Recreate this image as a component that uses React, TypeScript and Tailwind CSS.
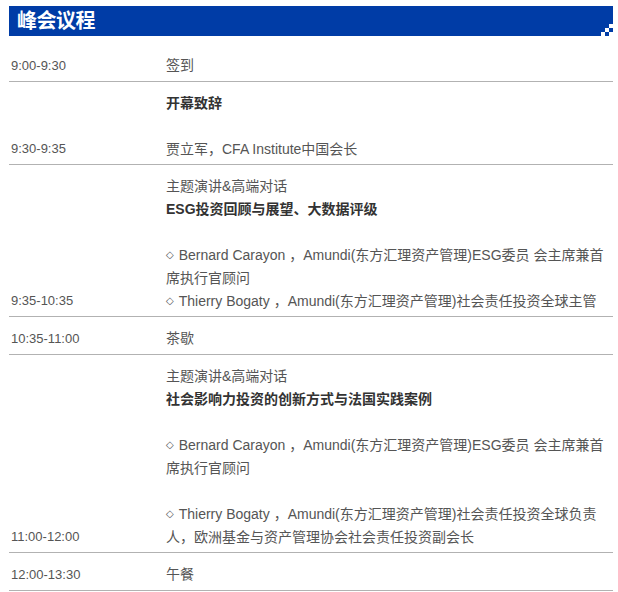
import React from "react";

type Line = { text: string; bold?: boolean; blank?: boolean; bullet?: boolean };
type Row = { time: string; lines: Line[] };

const rows: Row[] = [
    { time: "9:00-9:30", lines: [{ text: "签到" }] },
    {
        time: "9:30-9:35",
        lines: [{ text: "开幕致辞", bold: true }, { text: "", blank: true }, { text: "贾立军，CFA Institute中国会长" }],
    },
    {
        time: "9:35-10:35",
        lines: [
            { text: "主题演讲&高端对话" },
            { text: "ESG投资回顾与展望、大数据评级", bold: true },
            { text: "", blank: true },
            { text: "Bernard Carayon ，Amundi(东方汇理资产管理)ESG委员 会主席兼首席执行官顾问", bullet: true },
            { text: "Thierry Bogaty ，Amundi(东方汇理资产管理)社会责任投资全球主管", bullet: true },
        ],
    },
    { time: "10:35-11:00", lines: [{ text: "茶歇" }] },
    {
        time: "11:00-12:00",
        lines: [
            { text: "主题演讲&高端对话" },
            { text: "社会影响力投资的创新方式与法国实践案例", bold: true },
            { text: "", blank: true },
            { text: "Bernard Carayon ，Amundi(东方汇理资产管理)ESG委员 会主席兼首席执行官顾问", bullet: true },
            { text: "", blank: true },
            { text: "Thierry Bogaty ，Amundi(东方汇理资产管理)社会责任投资全球负责人，欧洲基金与资产管理协会社会责任投资副会长", bullet: true },
        ],
    },
    { time: "12:00-13:30", lines: [{ text: "午餐" }] },
];

function Corner() {
    return (
        <svg width="12" height="12" viewBox="0 0 12 12" className="absolute right-0 bottom-0">
            <rect x="8" y="0" width="4" height="4" fill="#fff" />
            <rect x="4" y="4" width="4" height="4" fill="#fff" />
            <rect x="0" y="8" width="4" height="4" fill="#fff" />
            <rect x="8" y="8" width="4" height="4" fill="#fff" />
        </svg>
    );
}

export default function App() {
    return (
        <div className="w-[618px] h-[592px] bg-white overflow-hidden pt-[6px] pl-[9px]" style={{ fontFamily: '"Liberation Sans", Arial, "Noto Sans CJK SC", sans-serif' }}>
            <div className="w-[604px]">
                <div className="relative h-[30px] bg-[#003ca6] pl-[8px] flex items-center">
                    <h1 className="text-white text-[20px] font-bold leading-none tracking-[-0.5px]">峰会议程</h1>
                    <Corner />
                </div>
                <div className="mt-[8px]">
                    {rows.map((r) => (
                        <div key={r.time} className="flex border-b border-[#b2b2b2] pt-[10px] pb-[3px]">
                            <div className="w-[157px] shrink-0 flex items-end pl-[2px] pb-[1px] text-[13px] leading-[23px] text-[#555]">
                                {r.time}
                            </div>
                            <div className="flex-1 text-[14px] leading-[23px] text-[#555] pr-[2px]">
                                {r.lines.map((l, i) =>
                                    l.blank ? (
                                        <div key={i} className="h-[23px]" />
                                    ) : (
                                        <p key={i} className={l.bold ? "font-bold text-[#333]" : ""}>
                                            {l.bullet && (
                                                <span className="inline-block mr-[5px] text-[10px] leading-none align-[2px]" style={{ fontFamily: '"DejaVu Sans", sans-serif' }}>
                                                    ◇
                                                </span>
                                            )}
                                            {l.text}
                                        </p>
                                    )
                                )}
                            </div>
                        </div>
                    ))}
                </div>
            </div>
        </div>
    );
}
